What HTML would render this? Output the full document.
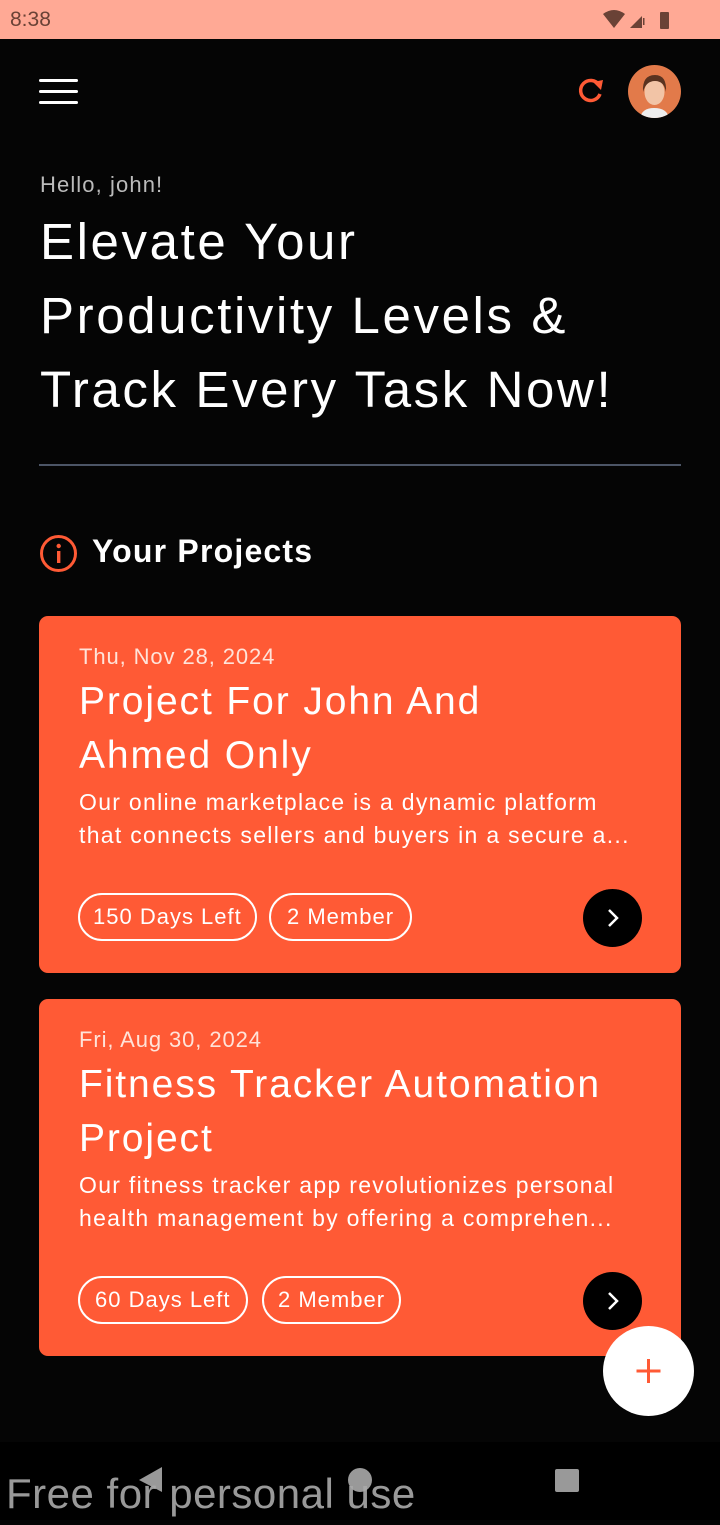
<!DOCTYPE html>
<html><head><meta charset="utf-8"><style>
*{margin:0;padding:0;box-sizing:border-box}
body{width:720px;height:1520px;background:#050505;font-family:"Liberation Sans",sans-serif;position:relative;overflow:hidden;color:#fff}
.status{height:39px;background:#ffa995;position:relative}
.status .t{position:absolute;left:10px;top:8px;font-size:21px;color:#6a4236}
.ham{position:absolute;left:39px;top:79px;width:39px}
.ham div{height:3px;background:#fff;border-radius:2px;margin-bottom:8px}
.av{position:absolute;left:628px;top:65px;width:53px;height:53px;border-radius:50%;background:#e27a4a;overflow:hidden}
.hello{position:absolute;left:40px;top:172px;font-size:22px;color:#bbb;letter-spacing:1.1px}
h1{position:absolute;left:40px;top:205px;font-size:51px;font-weight:normal;line-height:74px;letter-spacing:2.6px}
.hr{position:absolute;left:39px;top:464px;width:642px;height:2px;background:#4c5566}
.yp{position:absolute;left:92px;top:533px;font-size:32px;font-weight:bold;letter-spacing:1.2px}
.card{position:absolute;left:39px;width:642px;height:357px;background:#ff5a35;border-radius:9px}
.card .d{position:absolute;left:40px;top:28px;font-size:22px;color:#ffe3d9;letter-spacing:0.9px}
.card .ti{position:absolute;left:40px;top:59px;font-size:39px;line-height:54px;letter-spacing:1.9px;white-space:nowrap}
.card .ds{position:absolute;left:40px;top:170px;font-size:23px;line-height:33px;width:570px;letter-spacing:1.3px;white-space:nowrap}
.pill{position:absolute;top:277px;height:48px;border:2px solid #fff;border-radius:24px;font-size:22px;line-height:44px;padding:0 13px;letter-spacing:1px}
.go{position:absolute;left:544px;top:273px;width:59px;height:58px;border-radius:50%;background:#000}
.fab{position:absolute;left:603px;top:1326px;width:91px;height:90px;border-radius:50%;background:#fff}
.nav{position:absolute;left:0;top:1442px;width:720px;height:78px;background:#000}
</style></head><body>
<div class="status"><span class="t">8:38</span>
<svg style="position:absolute;left:600px;top:8px" width="80" height="24"><path d="M3 6 Q14 -2 25 6 L14 20Z" fill="#6a4236"/><path d="M30 20 L42 8 V20Z" fill="#6a4236"/><rect x="43" y="10" width="1.5" height="7" fill="#6a4236"/><rect x="60" y="4" width="9" height="17" rx="1" fill="#6a4236"/></svg></div>
<div class="ham"><div></div><div></div><div></div></div>
<svg style="position:absolute;left:575px;top:76px" width="30" height="30" viewBox="0 0 30 30"><path d="M24 9 A10 10 0 1 0 25 18" fill="none" stroke="#ff5a35" stroke-width="3.5"/><path d="M18 6 L28 4 L26 14Z" fill="#ff5a35"/></svg>
<div class="av"><svg width="53" height="53"><ellipse cx="26.5" cy="27" rx="10" ry="13" fill="#f2c4a6"/><path d="M15 27 Q14 10 27 10 Q39 10 38 27 Q36 16 27 16 Q18 16 15 27Z" fill="#5a3320"/><path d="M12 53 Q14 43 26 43 Q39 43 41 53Z" fill="#eee"/></svg></div>
<div class="hello">Hello, john!</div>
<h1>Elevate Your<br>Productivity Levels &amp;<br>Track Every Task Now!</h1>
<div class="hr"></div>
<svg style="position:absolute;left:39px;top:534px" width="40" height="40"><circle cx="19.5" cy="19.5" r="17" fill="none" stroke="#ff5a35" stroke-width="3"/><rect x="18" y="17" width="3.4" height="12" fill="#ff5a35"/><circle cx="19.7" cy="12" r="2.2" fill="#ff5a35"/></svg>
<div class="yp">Your Projects</div>
<div class="card" style="top:616px"><div class="d">Thu, Nov 28, 2024</div><div class="ti">Project For John And<br>Ahmed Only</div><div class="ds">Our online marketplace is a dynamic platform<br>that connects sellers and buyers in a secure a...</div>
<div class="pill" style="left:39px">150 Days Left</div><div class="pill" style="left:230px;padding:0 16px">2 Member</div>
<div class="go"><svg width="59" height="58"><path d="M26 21 L34 29 L26 37" fill="none" stroke="#fff" stroke-width="2.5"/></svg></div></div>
<div class="card" style="top:999px"><div class="d">Fri, Aug 30, 2024</div><div class="ti">Fitness Tracker Automation<br>Project</div><div class="ds">Our fitness tracker app revolutionizes personal<br>health management by offering a comprehen...</div>
<div class="pill" style="left:39px;padding:0 15px">60 Days Left</div><div class="pill" style="left:223px;padding:0 14px">2 Member</div>
<div class="go"><svg width="59" height="58"><path d="M26 21 L34 29 L26 37" fill="none" stroke="#fff" stroke-width="2.5"/></svg></div></div>
<div class="fab"><svg width="91" height="90"><path d="M45.5 33 V57 M33.5 45 H57.5" stroke="#ff5a35" stroke-width="3"/></svg></div>
<div class="nav"><svg width="720" height="78"><path d="M162 25 V50 L139 38Z" fill="#999"/><circle cx="360" cy="38" r="12" fill="#999"/><rect x="555" y="27" width="24" height="23" rx="2" fill="#999"/></svg>
<div style="position:absolute;left:6px;top:28px;font-size:42px;color:#aaa;opacity:.9;letter-spacing:0.5px">Free for personal use</div></div>
</body></html>
